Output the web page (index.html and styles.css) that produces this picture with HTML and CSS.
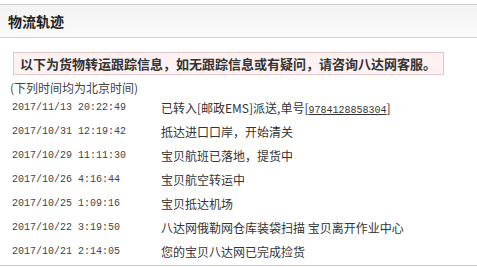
FILE: index.html
```html
<!DOCTYPE html>
<html lang="zh-CN">
<head>
<meta charset="utf-8">
<title>物流轨迹</title>
<link rel="stylesheet" href="styles.css">
</head>
<body>
<div class="panel">
  <div class="head"><h2 class="title">物流轨迹</h2></div>
  <div class="notice-wrap">
    <div class="notice">以下为货物转运跟踪信息，如无跟踪信息或有疑问，请咨询八达网客服。</div>
  </div>
  <div class="note">(下列时间均为北京时间)</div>
  <div class="rows">
    <div class="row"><span class="time">2017/11/13 20:22:49</span><span class="ev">已转入[邮政EMS]派送,单号[<span class="no">9784128858304</span>]</span></div>
    <div class="row"><span class="time">2017/10/31 12:19:42</span><span class="ev">抵达进口口岸，开始清关</span></div>
    <div class="row"><span class="time">2017/10/29 11:11:30</span><span class="ev">宝贝航班已落地，提货中</span></div>
    <div class="row"><span class="time">2017/10/26 4:16:44</span><span class="ev">宝贝航空转运中</span></div>
    <div class="row"><span class="time">2017/10/25 1:09:16</span><span class="ev">宝贝抵达机场</span></div>
    <div class="row"><span class="time">2017/10/22 3:19:50</span><span class="ev">八达网俄勒网仓库装袋扫描 宝贝离开作业中心</span></div>
    <div class="row"><span class="time">2017/10/21 2:14:05</span><span class="ev">您的宝贝八达网已完成捡货</span></div>
  </div>
</div>
</body>
</html>
```
FILE: styles.css
```css
html, body {
  margin: 0;
  padding: 0;
  background: #fff;
}
body {
  font-family: "Noto Sans CJK SC", "Noto Sans", sans-serif;
  color: #333;
  font-size: 12px;
}
.panel {
  padding-top: 4px;
  width: 477px;
  box-sizing: border-box;
  height: 266px;
  border-bottom: 1px solid #c8c8c8;
}
.head {
  height: 32px;
  border-top: 1px solid #cfcfcf;
  border-bottom: 1px solid #d2d2d2;
  background: linear-gradient(#f2f2f2, #fbfbfb);
  display: flex;
  align-items: center;
  padding-left: 8px;
}
.title {
  margin: 0;
  font-size: 14px;
  font-weight: bold;
  color: #222;
  line-height: 1;
}
.notice-wrap {
  padding: 14px 0 0 13px;
  display: flex;
}
.notice {
  height: 21px;
  line-height: 21px;
  padding: 0 7px 0 6px;
  border: 1px solid #e2c8c8;
  background: #fdf1f1;
  font-size: 13px;
  font-weight: bold;
  color: #333;
}
.note {
  margin-top: 6px;
  padding-left: 10px;
  height: 14px;
  line-height: 14px;
  font-size: 12px;
  color: #444;
}
.rows {
  display: flex;
  flex-direction: column;
}
.row {
  height: 24px;
  display: flex;
  align-items: center;
}
.time {
  width: 149px;
  padding-left: 12px;
  font-family: "Liberation Mono", "DejaVu Sans Mono", monospace;
  font-size: 10px;
  color: #444;
}
.ev {
  font-size: 12px;
  color: #333;
  white-space: nowrap;
}
.no {
  font-family: "Liberation Mono", monospace;
  font-size: 10px;
  text-decoration: underline;
}
```
